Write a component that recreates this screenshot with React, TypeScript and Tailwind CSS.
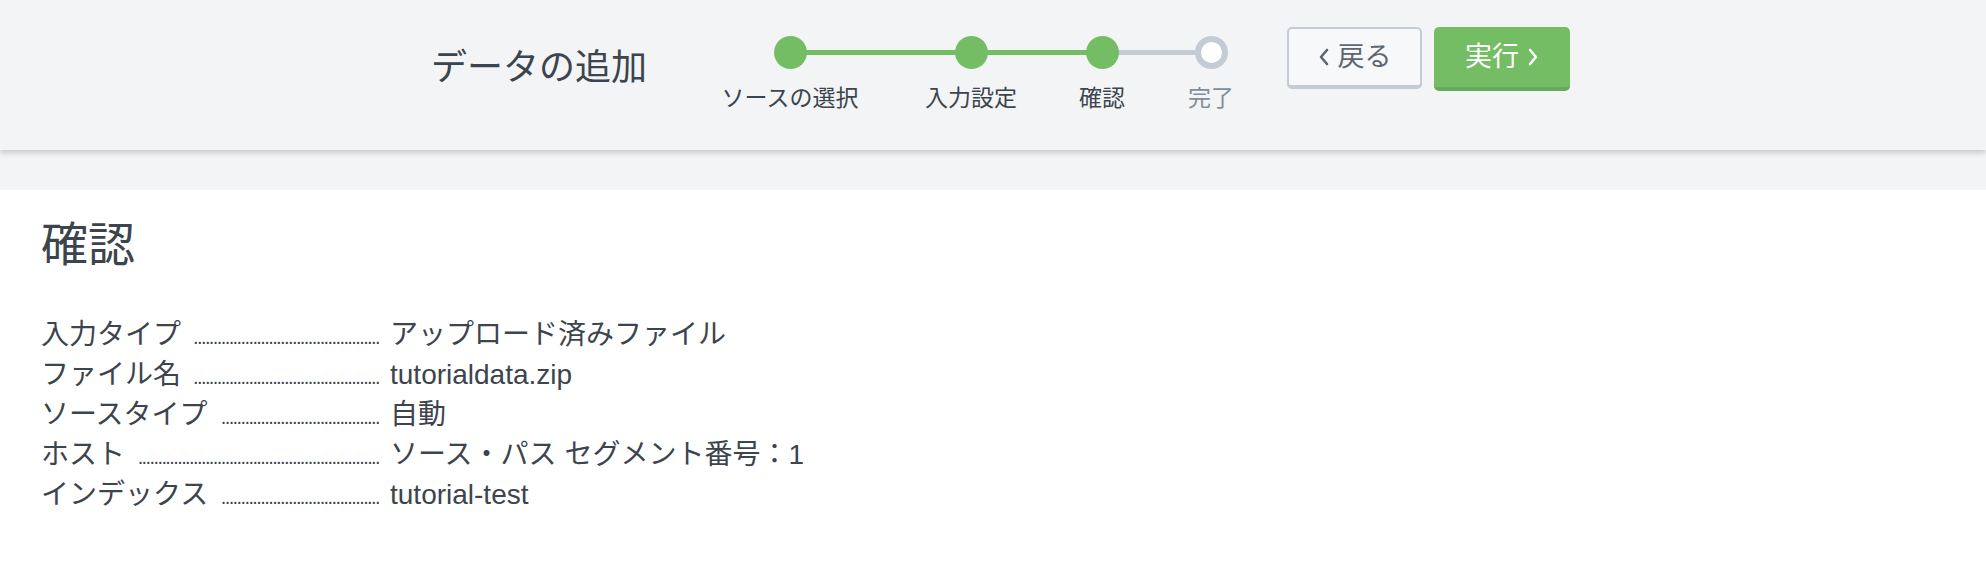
const font = { fontFamily: '"Liberation Sans", "Noto Sans CJK JP", sans-serif' };

const steps = [
    { label: "ソースの選択", width: "w-[138px]", ml: "", done: true },
    { label: "入力設定", width: "w-[92px]", ml: "ml-[66px]", done: true },
    { label: "確認", width: "w-[46px]", ml: "ml-[62px]", done: true },
    { label: "完了", width: "w-[46px]", ml: "ml-[63px]", done: false },
];

const rows = [
    { label: "入力タイプ", value: "アップロード済みファイル", dots: 47 },
    { label: "ファイル名", value: "tutorialdata.zip", dots: 47 },
    { label: "ソースタイプ", value: "自動", dots: 40 },
    { label: "ホスト", value: "ソース・パス セグメント番号：1", dots: 61 },
    { label: "インデックス", value: "tutorial-test", dots: 40 },
];

function Chevron({ dir, color }: { dir: "left" | "right"; color: string }) {
    return (
        <svg width="12" height="22" viewBox="0 0 12 22" fill="none">
            <polyline
                points={dir === "left" ? "9,4 3,11 9,18" : "3,4 9,11 3,18"}
                stroke={color}
                strokeWidth="2.6"
                strokeLinecap="round"
                strokeLinejoin="round"
            />
        </svg>
    );
}

function Stepper() {
    return (
        <div className="relative flex flex-row mt-[36px]">
            {/* connecting lines */}
            <div className="absolute top-[14px] left-[69px] w-[312px] h-[5px] bg-[#75bd65]" />
            <div className="absolute top-[14px] left-[381px] w-[109px] h-[5px] bg-[#c3cbd4]" />
            {steps.map((step) => {
                return (
                    <div key={step.label} className={`${step.width} ${step.ml} flex flex-col items-center relative`}>
                        {step.done ? (
                            <div className="w-[33px] h-[33px] rounded-full bg-[#75bd65]" />
                        ) : (
                            <div className="w-[33px] h-[33px] rounded-full bg-white border-[6px] border-[#c3cbd4]" />
                        )}
                        <span
                            className={`mt-[14px] text-[23px] leading-[30px] whitespace-nowrap ${
                                step.done ? "text-[#3c444d]" : "text-[#818d99]"
                            }`}
                        >
                            {step.label}
                        </span>
                    </div>
                );
            })}
        </div>
    );
}

export default function App() {
    return (
        <div className="w-full h-[562px] bg-white flex flex-col" style={font}>
            <div className="relative z-10 h-[150px] bg-[#f2f4f5] shadow-[0_3px_5px_rgba(60,68,77,0.22)] flex flex-row pl-[431px]">
                <div className="w-[290px] mt-[46px] text-[36px] leading-[44px] text-[#3c444d] whitespace-nowrap">
                    データの追加
                </div>
                <Stepper />
                <div className="flex flex-row items-start ml-[53px] mt-[27px] gap-[12px]">
                    <button className="w-[135px] h-[62px] rounded-[5px] border-2 border-[#c3cbd4] border-b-[4px] bg-[#f7f8fa] flex flex-row items-center justify-center gap-[8px] text-[27px] text-[#5c6773]">
                        <Chevron dir="left" color="#5c6773" />
                        <span className="leading-none">戻る</span>
                    </button>
                    <button className="w-[136px] h-[64px] rounded-[5px] bg-[#75bd65] border-b-[4px] border-[#67aa58] flex flex-row items-center justify-center gap-[8px] text-[27px] text-white">
                        <span className="leading-none">実行</span>
                        <Chevron dir="right" color="#ffffff" />
                    </button>
                </div>
            </div>
            <div className="h-[40px] bg-[#f2f4f5]" />
            <div className="flex-1 bg-white px-[41px] pt-[31px] text-[#3c444d]">
                <h1 className="text-[47px] leading-[48px]">確認</h1>
                <div className="mt-[46px] flex flex-col">
                    {rows.map((row) => {
                        return (
                            <div key={row.label} className="flex flex-row items-baseline h-[40px] text-[28px] leading-[40px]">
                                <div className="w-[338px] flex flex-row items-baseline">
                                    <span className="whitespace-nowrap">{row.label}</span>
                                    <span className="flex-1 ml-[8px] flex flex-row justify-end overflow-hidden whitespace-nowrap text-[20px] tracking-[-1.6px] leading-[40px]">
                                        {".".repeat(row.dots)}
                                    </span>
                                </div>
                                <span className="ml-[11px] whitespace-nowrap">{row.value}</span>
                            </div>
                        );
                    })}
                </div>
            </div>
        </div>
    );
}
